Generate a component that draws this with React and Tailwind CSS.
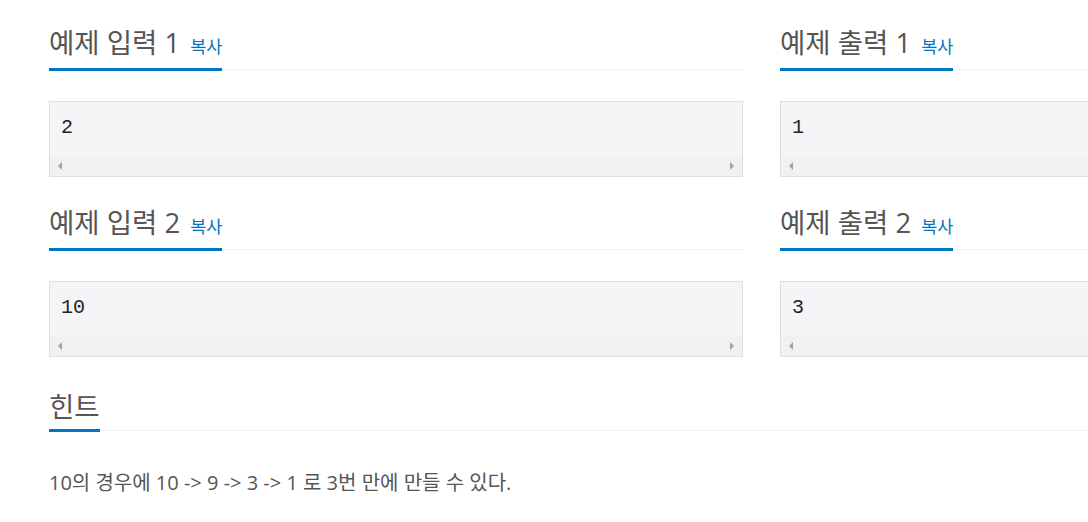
const SAMPLES = [
  { n: 1, input: "2", output: "1" },
  { n: 2, input: "10", output: "3" },
];

const SANS = { fontFamily: "'Open Sans', 'Noto Sans CJK KR', sans-serif" };

function Headline({ title, copy }) {
  return (
    <div className="border-b border-dotted border-[#e4e4e4]">
      <h2
        className="inline-block -mb-[2px] border-b-[3px] border-[#0076c0] pb-[5px] text-[27.5px] leading-[34px] font-normal text-[#555]"
        style={SANS}
      >
        {title}
        {copy && <span className="ml-[10px] text-[17.5px] text-[#0076c0]">복사</span>}
      </h2>
    </div>
  );
}

function SampleBox({ value }) {
  return (
    <div className="mt-[31px] border border-[#dedee3] bg-[#f5f5f7]">
      <pre
        className="h-[54px] px-[11px] pt-[14px] text-[20px] leading-[24px] text-[#222]"
        style={{ fontFamily: "'Liberation Mono', monospace" }}
      >
        {value}
      </pre>
      <div className="flex h-[20px] items-center justify-between bg-[#f1f1f1] px-[8px]">
        <span className="h-0 w-0 border-y-[4px] border-r-[4px] border-y-transparent border-r-[#a3a3a3]" />
        <span className="h-0 w-0 border-y-[4px] border-l-[4px] border-y-transparent border-l-[#a3a3a3]" />
      </div>
    </div>
  );
}

export default function App() {
  return (
    <div className="h-[522px] w-[1088px] overflow-hidden bg-white pl-[49px] pt-[26px]">
      {SAMPLES.map((s, i) => (
        <div key={s.n} className={`flex w-[1425px] gap-[37px] ${i > 0 ? "mt-[29px]" : ""}`}>
          <div className="w-[694px] shrink-0">
            <Headline title={`예제 입력 ${s.n}`} copy />
            <SampleBox value={s.input} />
          </div>
          <div className="w-[694px] shrink-0">
            <Headline title={`예제 출력 ${s.n}`} copy />
            <SampleBox value={s.output} />
          </div>
        </div>
      ))}

      {/* 힌트 */}
      <div className="mt-[33px] w-[1425px]">
        <Headline title="힌트" />
        <p className="mt-[38px] text-[20px] leading-[28px] text-[#555]" style={SANS}>
          10의 경우에 10 -&gt; 9 -&gt; 3 -&gt; 1 로 3번 만에 만들 수 있다.
        </p>
      </div>
    </div>
  );
}
